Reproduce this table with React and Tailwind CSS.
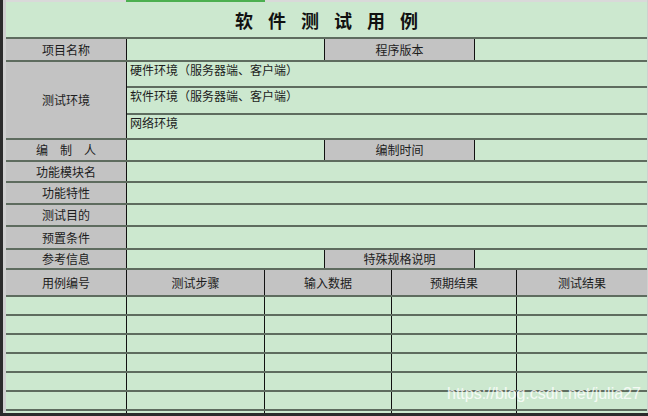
const font = { fontFamily: '"Noto Sans CJK SC", "Liberation Sans", sans-serif' };

function Row({ h, label, children }) {
  return (
    <div className={`flex border-b-2 border-[#5e6c5f] ${h}`}>
      <div className="w-[121px] shrink-0 bg-[#c3c3c3] border-r border-[#111] flex items-center justify-center">
        {label}
      </div>
      {children || <div className="flex-1 bg-[#cce8cf]" />}
    </div>
  );
}

function SplitRow({ h, label, mid }) {
  return (
    <Row h={h} label={label}>
      <div className="w-[198px] shrink-0 bg-[#cce8cf] border-r border-[#111]" />
      <div className="w-[150px] shrink-0 bg-[#c3c3c3] border-r border-[#111] flex items-center justify-center">
        {mid}
      </div>
      <div className="flex-1 bg-[#cce8cf]" />
    </Row>
  );
}

const cols = ['w-[121px]', 'w-[138px]', 'w-[127px]', 'w-[125px]'];
const heads = ['用例编号', '测试步骤', '输入数据', '预期结果', '测试结果'];

function GridRow({ h, gray, texts }) {
  return (
    <div className={`flex border-b-2 border-[#5e6c5f] ${h}`}>
      {heads.map((t, i) => (
        <div
          key={t}
          className={`${i < 4 ? cols[i] + ' shrink-0 border-r border-[#111]' : 'flex-1'} ${
            gray ? 'bg-[#c3c3c3]' : 'bg-[#cce8cf]'
          } flex items-center justify-center`}
        >
          {texts ? t : null}
        </div>
      ))}
    </div>
  );
}

export default function App() {
  return (
    <div className="relative w-[648px] h-[416px] overflow-hidden bg-[#2b2b2b] flex text-[12px] leading-4 text-[#1c1c1c]" style={font}>
      {/* sheet edge */}
      <div className="w-[3px] shrink-0" />
      <div className="w-[3px] shrink-0 bg-[#cfcfcf] h-[413px]" />

      <div className="w-[641px] shrink-0 h-[413px] overflow-hidden flex flex-col">
        {/* column header strip */}
        <div className="h-[2px] shrink-0 bg-[#d9d9d9] flex">
          <div className="w-[120px]" />
          <div className="w-[139px] bg-[#4caf50]" />
        </div>

        {/* title */}
        <div className="h-[37px] shrink-0 bg-[#cce8cf] border-b-2 border-[#5e6c5f] flex items-center justify-center">
          <span className="text-[18px] font-bold tracking-[15px] pl-[15px] text-[#111]">软件测试用例</span>
        </div>

        <SplitRow h="h-[23px] shrink-0" label="项目名称" mid="程序版本" />

        <Row h="h-[78px] shrink-0" label="测试环境">
          <div className="flex-1 flex flex-col bg-[#cce8cf]">
            <div className="h-[26px] border-b-2 border-[#5e6c5f] pl-[3px]">硬件环境（服务器端、客户端）</div>
            <div className="h-[27px] border-b-2 border-[#5e6c5f] pl-[3px]">软件环境（服务器端、客户端）</div>
            <div className="flex-1 pl-[3px]">网络环境</div>
          </div>
        </Row>

        <SplitRow h="h-[22px] shrink-0" label="编　制　人" mid="编制时间" />
        <Row h="h-[21px] shrink-0" label="功能模块名" />
        <Row h="h-[22px] shrink-0" label="功能特性" />
        <Row h="h-[22px] shrink-0" label="测试目的" />
        <Row h="h-[23px] shrink-0" label="预置条件" />
        <SplitRow h="h-[20px] shrink-0" label="参考信息" mid="特殊规格说明" />

        <GridRow h="h-[27px] shrink-0" gray texts />
        {[0, 1, 2, 3, 4, 5, 6].map((i) => (
          <GridRow key={i} h="h-[19px] shrink-0" />
        ))}
      </div>
      <div className="w-[1px] shrink-0 bg-[#cfcfcf] h-[413px]" />

      {/* watermark */}
      <div
        className="absolute left-[447px] top-[384px] text-[16px] leading-5 text-white/80"
        style={{ fontFamily: '"Liberation Sans", Arial, sans-serif' }}
      >
        https://blog.csdn.net/julia27
      </div>
    </div>
  );
}
